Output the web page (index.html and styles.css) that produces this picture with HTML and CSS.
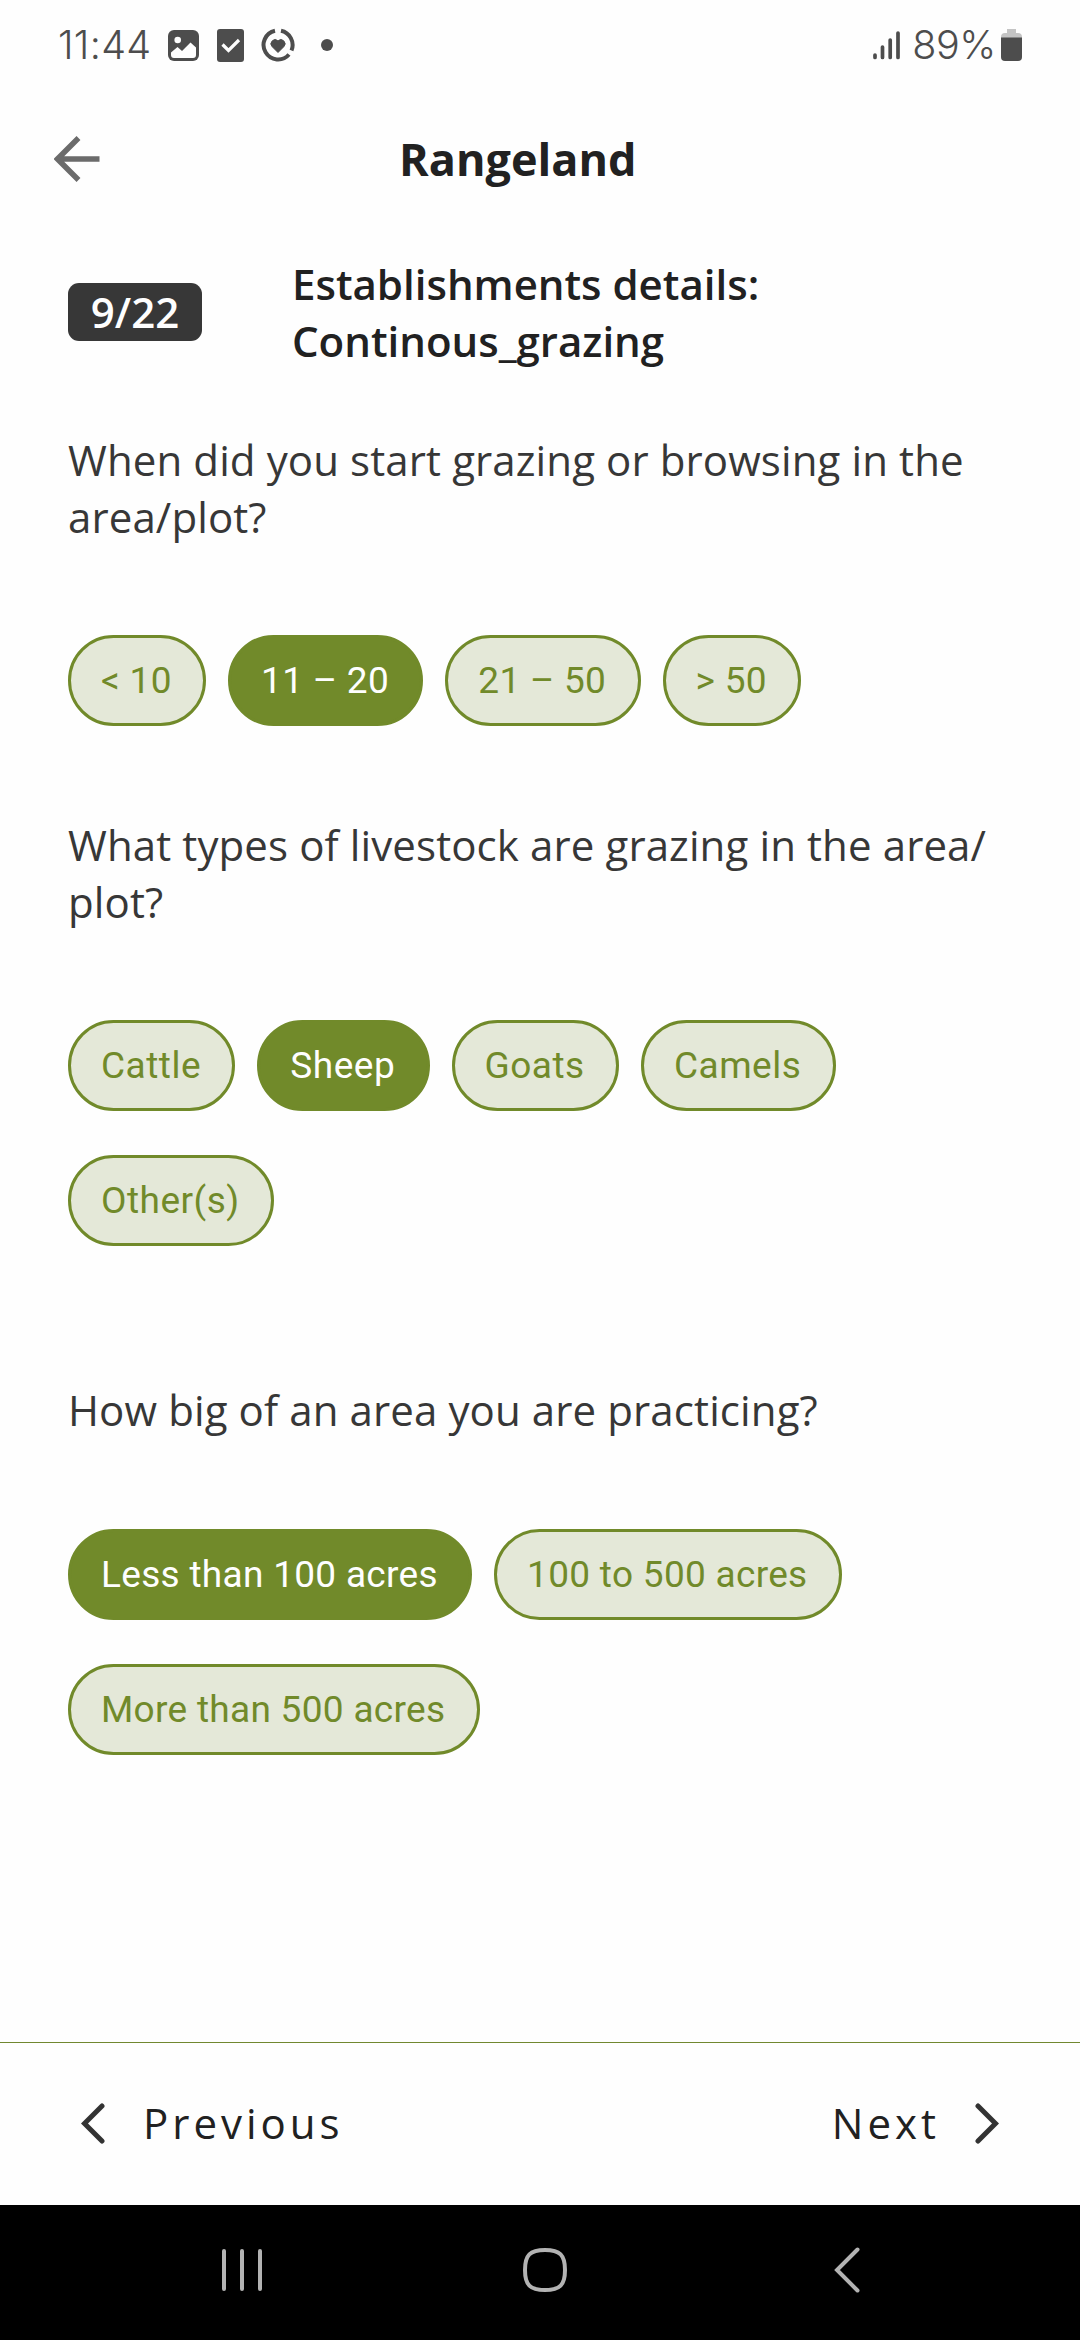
FILE: index.html
```html
<!DOCTYPE html>
<html lang="en">
<head>
<meta charset="utf-8">
<title>Rangeland</title>
<link rel="stylesheet" href="styles.css">
</head>
<body>
<header class="status">
  <div class="status-left">
    <span class="clock">11:44</span>
    <svg class="ic-image" width="31" height="31" viewBox="0 0 31 31"><rect width="31" height="31" rx="6" fill="#4d4d4d"/><circle cx="9.700" cy="10" r="3.300" fill="#fefefe"/><path d="M3 22.500 9.500 17l4.500 4 8.500-8.500 5.500 5V25a3 3 0 0 1-3 3H6a3 3 0 0 1-3-3z" fill="#fefefe"/></svg>
    <svg class="ic-check" width="27" height="33" viewBox="0 0 27 33"><rect width="27" height="33" rx="3" fill="#4d4d4d"/><path d="M5.500 15.500 11.500 21.500 22 11" fill="none" stroke="#fefefe" stroke-width="3.200"/></svg>
    <svg class="ic-ring" width="34" height="34" viewBox="0 0 34 34"><g fill="none" stroke="#4d4d4d" stroke-width="4"><path d="M14 2.800A14.500 14.500 0 1 0 28 26.500"/><path d="M20 2.800A14.500 14.500 0 0 1 30.500 22.500"/></g><path d="M17 24.500 11.200 18.700A4 4 0 0 1 17 12.900 4 4 0 0 1 22.800 18.700z" fill="#4d4d4d" stroke="#4d4d4d" stroke-linejoin="round"/></svg>
    <span class="dot"></span>
  </div>
  <div class="status-right">
    <svg width="28" height="31" viewBox="0 0 28 31" stroke="#4d4d4d" stroke-width="3.700" stroke-linecap="round"><path d="M2 25v2.500M9.500 17v10.500M17.200 10v17.500M25 3v24.500"/></svg>
    <span class="percent">89%</span>
    <svg width="21" height="32" viewBox="0 0 21 32"><path d="M6 0h9v4h2a4 4 0 0 1 4 4v1H0V8a4 4 0 0 1 4-4h2z" fill="#c4c4c4"/><path d="M0 8.500h21V28a4 4 0 0 1-4 4H4a4 4 0 0 1-4-4z" fill="#4d4d4d"/></svg>
  </div>
</header>
<div class="appbar">
  <svg width="46" height="46" viewBox="0 0 46 46" fill="none" stroke="#6b6b6b" stroke-width="5.500"><path d="M45.500 23H4M24.500 2 3.500 23l21 21"/></svg>
  <h1 class="title">Rangeland</h1>
</div>
<main class="content">
  <div class="step"><span class="badge">9/22</span><h2 class="heading">Establishments details:<br>Continous_grazing</h2></div>
  <section class="question">
    <p class="prompt">When did you start grazing or browsing in the<br>area/plot?</p>
    <div class="chips"><button class="chip">&lt; 10</button><button class="chip selected">11 – 20</button><button class="chip">21 – 50</button><button class="chip">&gt; 50</button></div>
  </section>
  <section class="question livestock">
    <p class="prompt">What types of livestock are grazing in the area/<br>plot?</p>
    <div class="chips"><button class="chip">Cattle</button><button class="chip selected">Sheep</button><button class="chip">Goats</button><button class="chip">Camels</button><button class="chip">Other(s)</button></div>
  </section>
  <section class="question">
    <p class="prompt">How big of an area you are practicing?</p>
    <div class="chips"><button class="chip selected">Less than 100 acres</button><button class="chip">100 to 500 acres</button><button class="chip">More than 500 acres</button></div>
  </section>
</main>
<footer class="pager">
  <div class="page-link"><svg width="24" height="41" viewBox="0 0 24 41" fill="none" stroke="#333" stroke-width="5" stroke-linecap="round"><path d="M21 3 3.500 20.500 21 38"/></svg><span class="prev">Previous</span></div>
  <div class="page-link"><span class="next">Next</span><svg width="24" height="41" viewBox="0 0 24 41" fill="none" stroke="#333" stroke-width="5" stroke-linecap="round"><path d="M3 3 20.500 20.500 3 38"/></svg></div>
</footer>
<nav class="sysnav">
  <svg width="42" height="44" viewBox="0 0 42 44" stroke="#b3b3b3" stroke-width="4" stroke-linecap="round"><path d="M3 3v38M21 3v38M39 3v38"/></svg>
  <svg width="44" height="44" viewBox="0 0 44 44" fill="none" stroke="#b3b3b3" stroke-width="4"><path d="M22 2C37 2 42 7 42 22S37 42 22 42 2 37 2 22 7 2 22 2z"/></svg>
  <svg width="26" height="46" viewBox="0 0 26 46" fill="none" stroke="#b3b3b3" stroke-width="4" stroke-linecap="round"><path d="M23.500 2.500 3 23l20.500 20.500"/></svg>
</nav>
</body>
</html>
```
FILE: styles.css
```css
* { box-sizing: border-box; }
body { margin: 0; width: 1080px; height: 2340px; display: flex; flex-direction: column; background: #fefefe; color: #212121; font-family: "Open Sans", "Noto Sans", sans-serif; font-size: 42px; line-height: 57px; }
svg { display: block; flex: none; }
h1, h2, p { margin: 0; }
.status { height: 90px; padding: 0 58px 0 58px; display: flex; justify-content: space-between; align-items: center; font-family: Inter, Roboto, sans-serif; font-size: 39.5px; font-weight: 350; color: #4d4d4d; }
.status-left, .status-right { display: flex; align-items: center; }
.clock { width: 110px; letter-spacing: 0.3px; }
.ic-check { margin-left: 18px; }
.ic-ring { margin-left: 17px; }
.dot { width: 12px; height: 12px; border-radius: 50%; background: #4d4d4d; margin-left: 26px; }
.percent { margin: 0 5px 0 11px; letter-spacing: -0.4px; }
.appbar { height: 137px; padding-left: 54px; display: flex; align-items: center; }
.title { margin: 0 0 0 299px; font-size: 45px; font-weight: 700; }
.content { flex: 1; padding: 28px 68px 0; }
.step { display: flex; align-items: center; height: 114px; }
.badge { width: 134px; height: 58px; border-radius: 11px; background: #373737; color: #fefefe; text-align: center; font-weight: 600; line-height: 57px; }
.heading { margin-left: 90px; font-size: 42px; font-weight: 600; }
.prompt { color: #373737; letter-spacing: 0.11px; white-space: nowrap; }
.question { padding-top: 90px; }
.question:nth-of-type(1) { padding-top: 62px; }
.question:nth-of-type(3) { padding-top: 135px; }
.chips { display: flex; flex-wrap: wrap; gap: 44px 22px; margin-top: 90px; }
.question:nth-of-type(3) .chips { margin-top: 91px; }
.chip { height: 91px; padding: 0 31.3px 0 30px; border: 3px solid #718a2a; border-radius: 46px; background: #e4e8d8; color: #718a2a; font-family: Roboto, sans-serif; font-size: 37px; letter-spacing: 0.3px; }
.livestock .chip { letter-spacing: 0.5px; }
.chip.selected { background: #718a2a; color: #fefefe; }
.pager { height: 163px; border-top: 1px solid #71882f; display: flex; justify-content: space-between; align-items: center; padding: 0 81px 2px; }
.page-link { display: flex; align-items: center; }
.prev { margin: 0 0 2px 38px; letter-spacing: 4px; }
.next { margin: 0 35px 2px 0; letter-spacing: 4px; }
.sysnav { height: 135px; background: #000; display: flex; align-items: center; gap: 260px; padding: 0 0 5px 221px; }
.sysnav svg:last-child { margin-left: 7px; }
```
